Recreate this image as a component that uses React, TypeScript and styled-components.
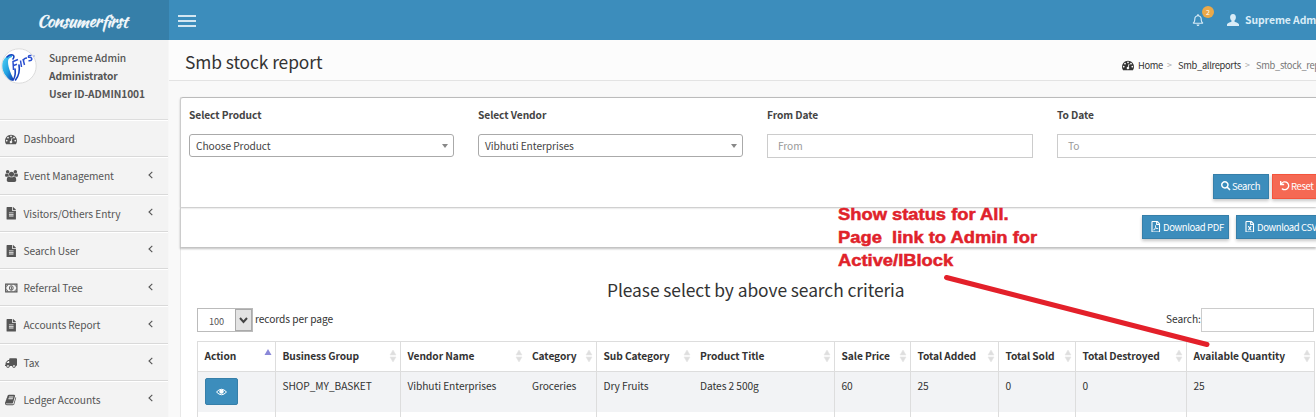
import React from "react";
import styled, { createGlobalStyle } from "styled-components";
import { FaFileAlt, FaTruck, FaRegBell, FaSearch, FaUndo, FaRegFilePdf, FaRegFileExcel } from "react-icons/fa";

const GlobalStyle = createGlobalStyle`
  *, *::before, *::after { box-sizing: border-box; }
  body {
    margin: 0;
    overflow: hidden;
    background: #f9f9f9;
    color: #333;
    font-family: "Noto Sans CJK SC", "Open Sans", sans-serif;
    font-size: 10.2px;
    letter-spacing: -0.07px;
    line-height: 18px;
  }
`;

const Page = styled.div`
  position: relative;
  width: 1316px;
  height: 417px;
  overflow: hidden;
  display: grid;
  grid-template-columns: 169px 1fr;
  grid-template-rows: 40px 1fr;
`;

const Brand = styled.div`
  background: #367fa9;
  color: #f4f9fc;
  display: flex;
  align-items: center;
  padding: 1px 0 0 37px;
  font: 17px/38px "Kaushan Script", cursive;
  letter-spacing: -0.45px;
  -webkit-text-stroke: 0.3px #f4f9fc;
`;

const TopBar = styled.header`
  min-width: 0;
  background: #3c8dbc;
  color: #d9ecf7;
  display: flex;
  align-items: center;
  padding-left: 9px;
  overflow: hidden;
  white-space: nowrap;
  > * { flex: none; }
`;

const Burger = styled.div`
  width: 18px;
  height: 12px;
  display: flex;
  flex-direction: column;
  justify-content: space-between;
  margin-top: 1px;
  i { height: 2px; background: #d3e6f1; }
`;

const Bell = styled.div`
  position: relative;
  display: flex;
  margin-left: 996px;
  font-size: 12px;
`;

const Badge = styled.span`
  position: absolute;
  left: 10px;
  top: -8px;
  width: 12px;
  height: 12px;
  border-radius: 6px;
  background: #eba949;
  color: #fff;
  font-size: 7px;
  line-height: 12px;
  text-align: center;
`;

const UserName = styled.b`
  margin-left: 6px;
  font-size: 10.4px;
`;

const Sidebar = styled.aside`
  background: #f3f3f3;
  border-right: 1px solid #f7f7f7;
  color: #555;
  overflow: hidden;
`;

const Profile = styled.div`
  height: 80px;
  display: flex;
  padding: 8px 0 0 1px;
  border-bottom: 1px solid #ddd;
`;

const ProfileText = styled.div`
  margin: 1px 0 0 12px;
  font-weight: 700;
  color: #555;
  div:first-child { font-weight: 500; }
`;

const MenuItem = styled.div`
  height: 37.25px;
  display: flex;
  align-items: center;
  padding: 1px 15px 0 5px;
  border-top: 1px solid #fff;
  border-bottom: 1px solid #d9d9d9;
`;

const MenuIcon = styled.span`
  width: 18.5px;
  display: flex;
  font-size: 12.5px;
`;

const Chevron = styled.svg`
  margin-left: auto;
  margin-top: -3px;
`;

const Main = styled.main`
  min-width: 0;
  display: flex;
  flex-direction: column;
`;

const TitleBar = styled.div`
  height: 41px;
  flex: none;
  display: flex;
  align-items: center;
  background: #fcfcfc;
  border-bottom: 1px solid #e3e3e3;
  padding: 5px 0 0 16px;
  white-space: nowrap;
`;

const Title = styled.h1`
  flex: none;
  margin: -1px 0 0;
  width: 937px;
  font-size: 17.35px;
  line-height: 24px;
  font-weight: 400;
`;

const Crumbs = styled.nav`
  display: flex;
  align-items: center;
  padding-top: 4px;
  font-size: 9.3px;
  letter-spacing: -0.3px;
`;

const Separator = styled.span`
  flex: none;
  width: 15px;
  padding-left: 4px;
  color: #aaa;
  font-size: 9px;
`;

const Crumb = styled.span<{ $dim?: boolean; $w: number }>`
  flex: none;
  display: flex;
  width: ${p => p.$w}px;
  color: ${p => (p.$dim ? "#777" : "#333")};
`;

const Content = styled.section`
  flex: 1;
  margin: 16px 0 0 11px;
  background: #fff;
  border-left: 1px solid #e8e8e8;
`;

const FilterPanel = styled.div`
  height: 110px;
  border-top: 1px solid #bbb;
  border-left: 1px solid #ccc;
  border-radius: 3px 0 0 0;
  margin-left: -1px;
  box-shadow: 0 1px 2px rgba(0, 0, 0, 0.25);
  padding: 8px 0 0 8px;
  display: flex;
  flex-direction: column;
`;

const Fields = styled.div`
  display: grid;
  grid-template-columns: 265px 265px 266px 266px;
  column-gap: 24px;
`;

const Label = styled.label`
  display: block;
  height: 28px;
  font-weight: 700;
  color: #444;
`;

const Select = styled.div`
  height: 23px;
  border: 1px solid #aaa;
  border-radius: 3px;
  display: flex;
  align-items: center;
  justify-content: space-between;
  padding: 1px 5px 0 6px;
  color: #444;
  &::after {
    content: "";
    border: 3px solid transparent;
    border-top: 4px solid #888;
    border-bottom: 0;
  }
`;

const DateInput = styled.div`
  height: 24px;
  border: 1px solid #ccc;
  padding: 2px 10px;
  color: #999;
`;

const SearchActions = styled.div`
  display: flex;
  gap: 3px;
  margin: 16px 0 0 1024px;
  white-space: nowrap;
`;

const Button = styled.button<{ $red?: boolean; $w: number; $h: number }>`
  flex: none;
  width: ${p => p.$w}px;
  height: ${p => p.$h}px;
  padding: 0 0 1px 7px;
  display: flex;
  align-items: center;
  gap: 1.5px;
  font: 9.5px/18px "Noto Sans CJK SC", sans-serif;
  letter-spacing: -0.36px;
  color: #fff;
  background: ${p => (p.$red ? "#f56954" : "#3c8dbc")};
  border: 1px solid ${p => (p.$red ? "#f4543c" : "#367fa9")};
  box-shadow: 0 2px 3px rgba(0, 0, 0, 0.22);
  svg { flex: none; height: ${p => (p.$w > 60 ? 11.5 : 9.5)}px; width: auto; }
`;

const DownloadPanel = styled.div`
  height: 40px;
  margin-left: -1px;
  border-left: 1px solid #ccc;
  box-shadow: 0 2px 2px rgba(0, 0, 0, 0.25);
  padding: 8px 0 0 961px;
  display: flex;
  gap: 7px;
  white-space: nowrap;
`;

const Hint = styled.h2`
  margin: 31px 0 0;
  padding-left: 426px;
  font-size: 17.4px;
  line-height: 24px;
  font-weight: 400;
  white-space: nowrap;
`;

const TableTools = styled.div`
  display: flex;
  margin: 6px 0 0 16px;
  height: 33px;
  white-space: nowrap;
  > * { flex: none; }
`;

const PageSize = styled.div`
  width: 56px;
  height: 24px;
  border: 1px solid #bbb;
  display: flex;
  justify-content: space-between;
  line-height: 24px;
  padding-left: 11px;
  font-size: 9.2px;
  color: #555;
`;

const PageSizeArrow = styled.span`
  width: 17px;
  border: 1px solid #aaa;
  background: #e3e3e3;
  display: flex;
  align-items: center;
  justify-content: center;
`;

const ToolLabel = styled.span<{ $w: number }>`
  width: ${p => p.$w}px;
  padding-left: 2px;
  line-height: 22px;
`;

const SearchInput = styled.div`
  width: 113px;
  height: 24px;
  border: 1px solid #ccc;
`;

const Table = styled.table`
  margin-left: 16px;
  width: 1118px;
  table-layout: fixed;
  border-collapse: collapse;
  white-space: nowrap;
`;

const Cell = styled.td<{ $line: boolean }>`
  height: 40px;
  padding: 5px 0 0 6.5px;
  vertical-align: top;
  border-left: ${p => (p.$line ? "1px solid #ddd" : "0")};
  &:last-child { border-right: 1px solid #ddd; }
`;

const HeadCell = styled.th<{ $line: boolean }>`
  height: 30px;
  padding: 0 3px 1px 6.5px;
  text-align: left;
  font-weight: 700;
  border: solid #ddd;
  border-width: ${p => (p.$line ? "1px 0 1px 1px" : "1px 0")};
  &:last-child { border-right-width: 1px; }
`;

const HeadInner = styled.div`
  display: flex;
  justify-content: space-between;
  align-items: center;
  svg { flex: none; }
`;

const BodyRow = styled.tr<{ $shaded?: boolean }>`
  background: ${p => (p.$shaded ? "#f2f3f5" : "#fff")};
`;

const ViewButton = styled.button`
  display: flex;
  align-items: center;
  justify-content: center;
  width: 33px;
  height: 27px;
  margin-top: 1px;
  padding: 0;
  background: #3c8dbc;
  border: 1px solid #367fa9;
  border-radius: 2px;
`;

const Note = styled.div`
  position: absolute;
  left: 838px;
  top: 203px;
  color: #e0222a;
  font: bold 16.5px/23px "Liberation Sans", Arial, sans-serif;
  letter-spacing: 0;
  -webkit-text-stroke: 0.5px #e0222a;
  white-space: pre;
  transform: scaleX(1.112);
  transform-origin: 0 0;
`;

const Pointer = styled.svg`
  position: absolute;
  left: 0;
  top: 0;
  pointer-events: none;
`;

const Gauge = () => (
  <svg width="12" height="12" viewBox="0 0 1792 1792" fill="currentColor">
    <path d="M384 1152q0-53-37.5-90.5T256 1024t-90.5 37.5T128 1152t37.5 90.5T256 1280t90.5-37.5T384 1152zm192-448q0-53-37.5-90.5T448 576t-90.5 37.5T320 704t37.5 90.5T448 832t90.5-37.5T576 704zm428 481l101-382q6-26-7.5-48.5T1059 725t-48 6.5-30 39.5L880 1153q-60 5-107 43.5t-63 98.5q-20 77 20 146t117 89 146-20 89-117q16-60-6-117t-72-91zm660-33q0-53-37.5-90.5T1536 1024t-90.5 37.5-37.5 90.5 37.5 90.5 90.5 37.5 90.5-37.5 37.5-90.5zm-640-640q0-53-37.5-90.5T896 384t-90.5 37.5T768 512t37.5 90.5T896 640t90.5-37.5T1024 512zm448 192q0-53-37.5-90.5T1344 576t-90.5 37.5T1216 704t37.5 90.5T1344 832t90.5-37.5T1472 704zm320 448q0 261-141 483-19 29-54 29H195q-35 0-54-29Q0 1414 0 1152q0-182 71-348t191-286 286-191 348-71 348 71 286 191 191 286 71 348z" />
  </svg>
);

const People = () => (
  <svg width="13" height="12" viewBox="0 0 1920 1792" fill="currentColor">
    <path d="M593 896q-162 5-265 128H194q-82 0-138-40.5T0 865q0-353 124-353 6 0 43.5 21t97.5 42.5T384 597q67 0 133-23-5 37-5 66 0 139 81 256zm1071 637q0 120-73 189.5t-194 69.5H523q-121 0-194-69.5T256 1533q0-53 3.5-103.5t14-109T300 1212t43-97.5 62-81 85.5-53.5T602 960q10 0 43 21.5t73 48 107 48 135 21.5 135-21.5 107-48 73-48 43-21.5q61 0 111.5 20t85.5 53.5 62 81 43 97.5 26.5 108.5 14 109 3.5 103.5zM640 256q0 106-75 181t-181 75-181-75-75-181 75-181T384 0t181 75 75 181zm704 384q0 159-112.5 271.5T960 1024 688.5 911.5 576 640t112.5-271.5T960 256t271.5 112.5T1344 640zm576 225q0 78-56 118.5t-138 40.5h-134q-103-123-265-128 81-117 81-256 0-29-5-66 66 23 133 23 59 0 119-21.5t97.5-42.5 43.5-21q124 0 124 353zm-128-609q0 106-75 181t-181 75-181-75-75-181 75-181 181-75 181 75 75 181z" />
  </svg>
);

const Money = () => (
  <svg width="13" height="12" viewBox="0 0 13 12" fill="none" stroke="currentColor">
    <path d="M.7 2.2h11.2v7.6H.7z" strokeWidth="1.2" />
    <path d="M1 4.4q1.8 0 1.8-2M11.6 4.4q-1.8 0-1.8-2M1 7.6q1.8 0 1.8 2M11.6 7.6q-1.8 0-1.8 2" strokeWidth=".8" />
    <ellipse cx="6.3" cy="6" rx="1.9" ry="2.3" strokeWidth=".9" />
    <path d="M5.7 5.2l.8-.5v2.5M5.5 7.3h1.9" strokeWidth=".8" />
  </svg>
);

const Book = () => (
  <svg width="12" height="12" viewBox="0 0 1792 1792" fill="currentColor">
    <path d="M1639 478q40 57 18 129l-275 906q-19 64-76.5 107.5T1183 1664H260q-77 0-148.5-53.5T12 1479q-24-67-2-127 0-4 3-27t4-37q1-8-3-21.5t-3-19.5q2-11 8-21t16.5-23.5T52 1179q23-38 45-91.5t30-91.5q3-10 .5-30t-.5-28q3-11 17-28t17-23q21-36 42-92t25-90q1-9-2.5-32t.5-28q4-13 22-30.5t22-22.5q19-26 42.5-84.5T340 411q1-8-3-25.5t-2-26.5q2-8 9-18t18-23 17-21q8-12 16.5-30.5t15-35 16-36 19.5-32 26.5-23.5 36-11.5T556 134l-1 3q38-9 51-9h761q74 0 114 56t18 130l-274 906q-36 119-71.5 153.5T1025 1408H156q-27 0-38 15-11 16-1 43 24 70 144 70h923q29 0 56-15.5t35-41.5l300-987q7-22 5-57 38 15 59 43zm-1064 2q-4 13 2 22.5t20 9.5h608q13 0 25.5-9.5T1247 480l21-64q4-13-2-22.5t-20-9.5H638q-13 0-25.5 9.5T596 416zm-83 256q-4 13 2 22.5t20 9.5h608q13 0 25.5-9.5T1164 736l21-64q4-13-2-22.5t-20-9.5H555q-13 0-25.5 9.5T513 672z" />
  </svg>
);

const Truck = styled(FaTruck)`
  transform: scaleX(-1);
  width: 12px;
  height: 10px;
`;

const Person = styled.svg`
  margin-left: 23px;
`;

const Avatar = () => (
  <svg width="36" height="36" viewBox="0 0 36 36">
    <defs>
      <linearGradient id="swoosh" x1="0" y1="0" x2="1" y2="1">
        <stop offset="0" stopColor="#55d4f5" />
        <stop offset=".55" stopColor="#1f9fe0" />
        <stop offset="1" stopColor="#1230a8" />
      </linearGradient>
    </defs>
    <circle cx="18" cy="18" r="17.2" fill="#fff" stroke="#dcdcdc" />
    <path d="M5 9C0 13 0 22 5 28c3 4 6 6 8 4C11 28 7 20 7 14c0-3 1-4 4-5 1-3-3-3-6 0z" fill="url(#swoosh)" />
    <path d="M6 9c4-4 9-2 6 2M12 32c3-4 2.500-8 2-11M18 17c1 6 .5 10-3.500 15" fill="none" stroke="#1743c0" strokeWidth="1.600" strokeLinecap="round" />
    <path d="M12.500 22L12 13.500l5-2M12.500 17.500l3.500-1.200M19.500 12.500l1 6.500M23.500 17l-1.500-6M22.500 13q0-3 3.500-3M30.500 7.500q-3.500-.5-3 1.700 3.500-.2 3.300 2.100-.3 1.700-3.300 1.400" fill="none" stroke="#2a4fd0" strokeWidth="1.500" />
    <circle cx="33" cy="8" r=".8" fill="#8aa0dc" />
  </svg>
);

const SortMark = ({ active }: { active?: boolean }) => (
  <svg width="8" height="14" viewBox="0 0 8 14">
    {active ? <path d="M0.500 6L4 0l3.500 6z" fill="#8a88d8" /> : <path d="M1 6l3-5 3 5zM1 8l3 5 3-5z" fill="#dedede" stroke="#e6e6e6" strokeWidth=".6" />}
  </svg>
);

const menu: { label: string; icon: React.ReactNode; leaf?: boolean }[] = [
  { label: "Dashboard", icon: <Gauge />, leaf: true },
  { label: "Event Management", icon: <People /> },
  { label: "Visitors/Others Entry", icon: <FaFileAlt /> },
  { label: "Search User", icon: <FaFileAlt /> },
  { label: "Referral Tree", icon: <Money /> },
  { label: "Accounts Report", icon: <FaFileAlt /> },
  { label: "Tax", icon: <Truck /> },
  { label: "Ledger Accounts", icon: <Book /> },
];

const columns = [
  { title: "Action", width: 78, line: true, value: "" },
  { title: "Business Group", width: 125, line: true, value: "SHOP_MY_BASKET" },
  { title: "Vendor Name", width: 125, line: true, value: "Vibhuti Enterprises" },
  { title: "Category", width: 71, line: false, value: "Groceries" },
  { title: "Sub Category", width: 97, line: true, value: "Dry Fruits" },
  { title: "Product Title", width: 141, line: false, value: "Dates 2 500g" },
  { title: "Sale Price", width: 76, line: true, value: "60" },
  { title: "Total Added", width: 88, line: true, value: "25" },
  { title: "Total Sold", width: 77, line: true, value: "0" },
  { title: "Total Destroyed", width: 111, line: true, value: "0" },
  { title: "Available Quantity", width: 128, line: true, value: "25" },
];

export default function App() {
  return (
    <Page>
      <GlobalStyle />
      <Brand>Consumerfirst</Brand>
      <TopBar>
        <Burger><i /><i /><i /></Burger>
        <Bell><FaRegBell /><Badge>2</Badge></Bell>
        <Person width="12" height="12" viewBox="0 0 12 12" fill="currentColor">
          <path d="M6 0c2 0 2.900 1.400 2.900 3.300 0 1.500-.6 2.700-1.400 3.300v.9c0 .5 4.500 1.300 4.500 3.100V12H0v-1.400c0-1.800 4.500-2.600 4.500-3.100v-.9C3.700 6 3.100 4.800 3.100 3.300 3.100 1.400 4 0 6 0z" />
        </Person>
        <UserName>Supreme Admin</UserName>
      </TopBar>
      <Sidebar>
        <Profile>
          <Avatar />
          <ProfileText>
            <div>Supreme Admin</div>
            <div>Administrator</div>
            <div>User ID-ADMIN1001</div>
          </ProfileText>
        </Profile>
        {menu.map(m => (
          <MenuItem key={m.label}>
            <MenuIcon>{m.icon}</MenuIcon>
            {m.label}
            {!m.leaf && (
              <Chevron width="5" height="8" viewBox="0 0 5 8" fill="none" stroke="currentColor" strokeWidth="1.1">
                <path d="M4.300.8L1 4l3.300 3.200" />
              </Chevron>
            )}
          </MenuItem>
        ))}
      </Sidebar>
      <Main>
        <TitleBar>
          <Title>Smb stock report</Title>
          <Crumbs>
            <Crumb $w={16}><Gauge /></Crumb>
            <Crumb $w={25}>Home</Crumb>
            <Separator>&gt;</Separator>
            <Crumb $w={63}>Smb_allreports</Crumb>
            <Separator>&gt;</Separator>
            <Crumb $w={80} $dim>Smb_stock_report</Crumb>
          </Crumbs>
        </TitleBar>
        <Content>
          <FilterPanel>
            <Fields>
              <div><Label>Select Product</Label><Select>Choose Product</Select></div>
              <div><Label>Select Vendor</Label><Select>Vibhuti Enterprises</Select></div>
              <div><Label>From Date</Label><DateInput>From</DateInput></div>
              <div><Label>To Date</Label><DateInput>To</DateInput></div>
            </Fields>
            <SearchActions>
              <Button $w={56} $h={25}><FaSearch />Search</Button>
              <Button $w={56} $h={25} $red><FaUndo />Reset</Button>
            </SearchActions>
          </FilterPanel>
          <DownloadPanel>
            <Button $w={87} $h={24}><FaRegFilePdf />Download PDF</Button>
            <Button $w={87} $h={24}><FaRegFileExcel />Download CSV</Button>
          </DownloadPanel>
          <Hint>Please select by above search criteria</Hint>
          <TableTools>
            <PageSize>
              100
              <PageSizeArrow>
                <svg width="9" height="7" viewBox="0 0 9 7" fill="none" stroke="#444" strokeWidth="2"><path d="M1 1l3.500 4L8 1" /></svg>
              </PageSizeArrow>
            </PageSize>
            <ToolLabel $w={911}>records per page</ToolLabel>
            <ToolLabel $w={37}>Search:</ToolLabel>
            <SearchInput />
          </TableTools>
          <Table>
            <colgroup>{columns.map(c => <col key={c.title} width={c.width} />)}</colgroup>
            <thead>
              <tr>
                {columns.map((c, i) => (
                  <HeadCell key={c.title} $line={c.line}>
                    <HeadInner>{c.title}<SortMark active={i === 0} /></HeadInner>
                  </HeadCell>
                ))}
              </tr>
            </thead>
            <tbody>
              <BodyRow $shaded>
                {columns.map((c, i) => (
                  <Cell key={c.title} $line={c.line}>
                    {i === 0 ? (
                      <ViewButton aria-label="View">
                        <svg width="11" height="8" viewBox="0 0 11 8">
                          <path d="M.5 4Q5.500-1.500 10.500 4 5.500 9.500.5 4z" fill="none" stroke="#fff" />
                          <circle cx="5.500" cy="3.600" r="2.200" fill="#fff" />
                        </svg>
                      </ViewButton>
                    ) : c.value}
                  </Cell>
                ))}
              </BodyRow>
              <BodyRow>{columns.map(c => <Cell key={c.title} $line={c.line} />)}</BodyRow>
            </tbody>
          </Table>
        </Content>
      </Main>
      <Note>{"Show status for All.\nPage  link to Admin for\nActive/IBlock"}</Note>
      <Pointer width="1316" height="417" viewBox="0 0 1316 417">
        <path d="M946.500 277.500L1207 344.500" stroke="#e3202a" strokeWidth="5" strokeLinecap="round" />
      </Pointer>
    </Page>
  );
}
